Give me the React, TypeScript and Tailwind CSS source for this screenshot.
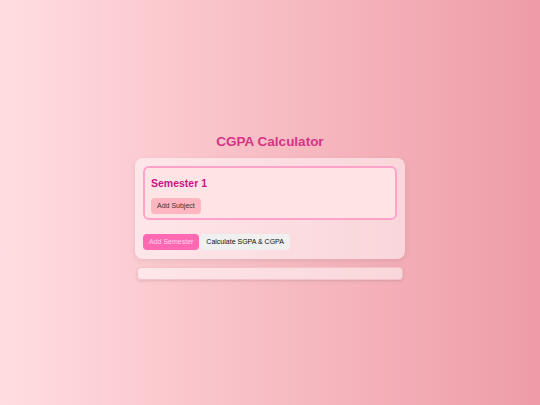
export default function App() {
  return (
    <div
      className="w-full h-[405px] bg-gradient-to-r from-[#ffdde1] to-[#ee9ca7] flex flex-col items-center pt-[133px]"
      style={{ fontFamily: '"Liberation Sans", Arial, sans-serif' }}
    >
      <h1 className="text-[13.5px] leading-[18px] font-bold text-[#d63384] text-center">CGPA Calculator</h1>

      <div className="mt-[7px] w-[270px] h-[101px] rounded-lg bg-white/50 shadow-[0_2px_6px_rgba(0,0,0,0.08)] p-[8px]">
        <div className="rounded-md border-2 border-[#ffa3cb] bg-[#ffe4e6] px-[6px] pt-[9px] h-[54px]">
          <h2 className="text-[10.5px] leading-[12px] font-bold text-[#c71585]">Semester 1</h2>
          <button className="mt-[9px] h-[16px] px-[6px] rounded-sm bg-[#ffb6c1] text-[7px] text-[#333]">
            Add Subject
          </button>
        </div>
        <div className="mt-[14px] flex items-center gap-[1px]">
          <button className="h-[16px] px-[6px] rounded-sm bg-[#ff69b4] text-[7px] text-[#ffd6ea]">
            Add Semester
          </button>
          <button className="h-[16px] px-[6px] rounded-sm bg-[#f0f0f0] text-[7px] text-[#111]">
            Calculate SGPA &amp; CGPA
          </button>
        </div>
      </div>

      <div className="mt-[8px] w-[266px] h-[13px] rounded-[4px] bg-white/50 border border-[#f3c3c8] shadow-[0_1px_3px_rgba(0,0,0,0.12)]"></div>
    </div>
  )
}
